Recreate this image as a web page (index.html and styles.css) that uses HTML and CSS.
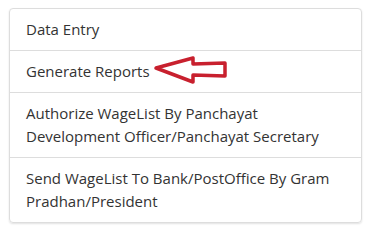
FILE: index.html
```html
<!DOCTYPE html>
<html lang="en">
<head>
    <meta charset="UTF-8">
    <title>Menu</title>
    <link rel="stylesheet" href="styles.css">
</head>
<body>
    <ul class="menu-list">
        <li>Data Entry</li>
        <li>Generate Reports
            <!-- panah merah penunjuk -->
            <svg class="pointer" width="76" height="30" viewBox="0 0 76 30">
                <polygon points="3,13 40,3 40,9 72,8 72,21 40,20 40,27" fill="none" stroke="#c8202e" stroke-width="3.5" stroke-linejoin="round"/>
            </svg>
        </li>
        <li>Authorize WageList By Panchayat Development Officer/Panchayat Secretary</li>
        <li>Send WageList To Bank/PostOffice By Gram Pradhan/President</li>
    </ul>
</body>
</html>
```

FILE: styles.css
```css
body {
    margin: 0;
    padding: 8px 10px 7px 9px;
    background: #fff;
    font-family: "Open Sans", sans-serif;
    font-size: 15px;
    color: #333;
}

.menu-list {
    list-style: none;
    margin: 0;
    padding: 0;
    border: 1px solid #ddd;
    border-radius: 4px;
    box-shadow: 0 1px 2px rgba(0, 0, 0, 0.12);
}

.menu-list li {
    padding: 9px 17px 9px 16px;
    line-height: 23px;
    border-top: 1px solid #ddd;
}

.menu-list li:first-child {
    border-top: none;
}

.pointer {
    vertical-align: middle;
    margin: -11px 0 -5px -1px;
}
```
